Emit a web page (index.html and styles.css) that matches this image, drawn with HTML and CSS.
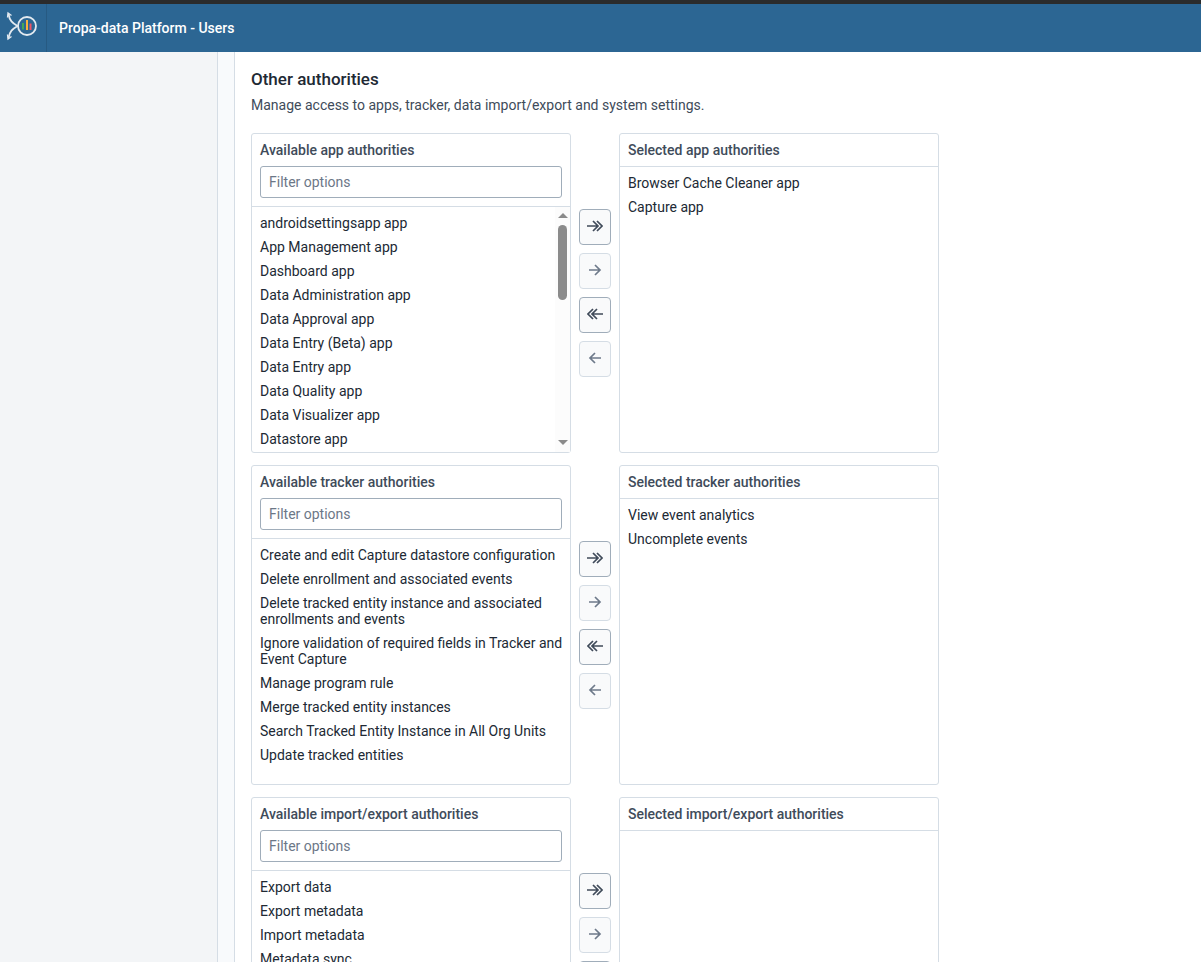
FILE: index.html
```html
<!DOCTYPE html>
<html lang="en">
<head>
  <meta charset="UTF-8">
  <meta name="viewport" content="width=device-width, initial-scale=1.0">
  <title>Propa-data Platform - Users</title>
  <link rel="stylesheet" href="styles.css">
</head>
<body>
  <svg class="symbols" aria-hidden="true">
    <symbol id="arrow-right" viewBox="0 0 16 16">
      <path d="M2 7h11M8 2l5 5-5 5"/>
    </symbol>
    <symbol id="arrow-left" viewBox="0 0 16 16">
      <path d="M14 7H3M8 2L3 7l5 5"/>
    </symbol>
    <symbol id="arrow-right-double" viewBox="0 0 16 16">
      <path d="M0 7h11M6 2l5 5-5 5M10 2l5 5-5 5"/>
    </symbol>
    <symbol id="arrow-left-double" viewBox="0 0 16 16">
      <path d="M16 7H5M10 2L5 7l5 5M6 2L1 7l5 5"/>
    </symbol>
  </svg>

  <header class="header">
    <a class="logo" href="#" aria-label="Home">
      <svg width="32" height="32" viewBox="0 0 32 32">
        <path d="M2.500 4C3.500 10.500 6.500 13 11.500 16C6.500 19 3.500 21.500 2.500 28"/>
        <path class="tip" d="M1.500 7.500L2 3l3.500 2.500M1.500 24.500L2 29l3.500-2.500"/>
        <circle cx="21" cy="16" r="9"/>
        <path class="bar-green" d="M17 13v6.500"/>
        <path class="bar-yellow" d="M21 10v10"/>
        <path class="bar-red" d="M24.500 13.500V20"/>
      </svg>
    </a>
    <h1>Propa-data Platform - Users</h1>
  </header>

  <div class="page">
    <nav class="sidebar"></nav>
    <main class="content">
      <h2>Other authorities</h2>
      <p class="description">Manage access to apps, tracker, data import/export and system settings.</p>

      <section class="transfer">
        <div class="picker">
          <div class="picker-header">
            <label for="filter-app">Available app authorities</label>
            <input type="text" id="filter-app" placeholder="Filter options">
          </div>
          <div class="picker-body">
            <ul class="options">
              <li>androidsettingsapp app</li>
              <li>App Management app</li>
              <li>Dashboard app</li>
              <li>Data Administration app</li>
              <li>Data Approval app</li>
              <li>Data Entry (Beta) app</li>
              <li>Data Entry app</li>
              <li>Data Quality app</li>
              <li>Data Visualizer app</li>
              <li>Datastore app</li>
            </ul>
            <div class="scrollbar" aria-hidden="true">
              <svg width="10" height="5" viewBox="0 0 10 5"><path d="M0 5L5 0L10 5z"/></svg>
              <div class="track"><div class="thumb"></div></div>
              <svg width="10" height="5" viewBox="0 0 10 5"><path d="M0 0L5 5L10 0z"/></svg>
            </div>
          </div>
        </div>
        <div class="actions">
          <button type="button" aria-label="Add all"><svg><use href="#arrow-right-double"/></svg></button>
          <button type="button" aria-label="Add selected" disabled><svg><use href="#arrow-right"/></svg></button>
          <button type="button" aria-label="Remove all"><svg><use href="#arrow-left-double"/></svg></button>
          <button type="button" aria-label="Remove selected" disabled><svg><use href="#arrow-left"/></svg></button>
        </div>
        <div class="picker">
          <div class="picker-header">
            <h3>Selected app authorities</h3>
          </div>
          <div class="picker-body">
            <ul class="options">
              <li>Browser Cache Cleaner app</li>
              <li>Capture app</li>
            </ul>
          </div>
        </div>
      </section>

      <section class="transfer">
        <div class="picker">
          <div class="picker-header">
            <label for="filter-tracker">Available tracker authorities</label>
            <input type="text" id="filter-tracker" placeholder="Filter options">
          </div>
          <div class="picker-body">
            <ul class="options">
              <li>Create and edit Capture datastore configuration</li>
              <li>Delete enrollment and associated events</li>
              <li>Delete tracked entity instance and associated enrollments and events</li>
              <li>Ignore validation of required fields in Tracker and Event Capture</li>
              <li>Manage program rule</li>
              <li>Merge tracked entity instances</li>
              <li>Search Tracked Entity Instance in All Org Units</li>
              <li>Update tracked entities</li>
            </ul>
          </div>
        </div>
        <div class="actions">
          <button type="button" aria-label="Add all"><svg><use href="#arrow-right-double"/></svg></button>
          <button type="button" aria-label="Add selected" disabled><svg><use href="#arrow-right"/></svg></button>
          <button type="button" aria-label="Remove all"><svg><use href="#arrow-left-double"/></svg></button>
          <button type="button" aria-label="Remove selected" disabled><svg><use href="#arrow-left"/></svg></button>
        </div>
        <div class="picker">
          <div class="picker-header">
            <h3>Selected tracker authorities</h3>
          </div>
          <div class="picker-body">
            <ul class="options">
              <li>View event analytics</li>
              <li>Uncomplete events</li>
            </ul>
          </div>
        </div>
      </section>

      <section class="transfer">
        <div class="picker">
          <div class="picker-header">
            <label for="filter-import">Available import/export authorities</label>
            <input type="text" id="filter-import" placeholder="Filter options">
          </div>
          <div class="picker-body">
            <ul class="options">
              <li>Export data</li>
              <li>Export metadata</li>
              <li>Import metadata</li>
              <li>Metadata sync</li>
            </ul>
          </div>
        </div>
        <div class="actions">
          <button type="button" aria-label="Add all"><svg><use href="#arrow-right-double"/></svg></button>
          <button type="button" aria-label="Add selected" disabled><svg><use href="#arrow-right"/></svg></button>
          <button type="button" aria-label="Remove all"><svg><use href="#arrow-left-double"/></svg></button>
          <button type="button" aria-label="Remove selected" disabled><svg><use href="#arrow-left"/></svg></button>
        </div>
        <div class="picker">
          <div class="picker-header">
            <h3>Selected import/export authorities</h3>
          </div>
          <div class="picker-body">
            <ul class="options"></ul>
          </div>
        </div>
      </section>
    </main>
  </div>
</body>
</html>
```

FILE: styles.css
```css
* {
  box-sizing: border-box;
}
body {
  display: flex;
  flex-direction: column;
  height: 100vh;
  margin: 0;
  overflow: hidden;
  font-family: Roboto, sans-serif;
  font-size: 14px;
  line-height: 16px;
  color: #212934;
  background: #f8fafc;
}
h1, h2, h3, p, ul {
  margin: 0;
  padding: 0;
}
.symbols {
  display: none;
}

/* Header bar */
.header {
  flex: none;
  display: flex;
  align-items: center;
  height: 52px;
  border-top: 4px solid #2b2b2b;
  background: #2c6693;
  color: #ffffff;
}
.header h1 {
  padding-left: 12px;
  font-size: 14px;
  font-weight: 500;
}
.logo {
  display: flex;
  align-items: center;
  height: 48px;
  padding: 0 8px 4px 6px;
  border-right: 1px solid #275a82;
}
.logo path, .logo circle {
  fill: none;
  stroke: #e3eaf0;
  stroke-width: 1.8;
}
.logo .tip {
  stroke-width: 1.3;
}
.logo .bar-green {
  stroke: #43a858;
  stroke-width: 2;
}
.logo .bar-yellow {
  stroke: #fbb03b;
  stroke-width: 2;
}
.logo .bar-red {
  stroke: #ef5366;
  stroke-width: 2;
}

/* Page */
.page {
  flex: 1;
  display: flex;
  gap: 16px;
  min-height: 0;
}
.sidebar {
  flex: none;
  width: 218px;
  background: #f3f5f7;
  border-right: 1px solid #d5dde5;
}
.content {
  flex: 1;
  padding: 16px;
  overflow: hidden;
  background: #ffffff;
  border-left: 1px solid #d5dde5;
}
.content h2 {
  font-size: 17px;
  font-weight: 500;
  line-height: 22px;
}
.description {
  margin: 6px 0 19px;
  line-height: 18px;
  color: #404b5a;
}

/* Transfer */
.transfer {
  display: flex;
  margin-bottom: 12px;
}
.picker {
  display: flex;
  flex-direction: column;
  width: 320px;
  height: 320px;
  border: 1px solid #d5dde5;
  border-radius: 3px;
}
.picker-header {
  display: flex;
  flex-direction: column;
  gap: 8px;
  padding: 8px;
  border-bottom: 1px solid #d5dde5;
}
.picker-header label, .picker-header h3 {
  font-size: 14px;
  font-weight: 500;
  color: #404b5a;
}
.picker-header input {
  height: 32px;
  padding: 0 8px;
  border: 1px solid #a0adba;
  border-radius: 3px;
  font-family: inherit;
  font-size: 14px;
  color: #212934;
}
.picker-header input::placeholder {
  color: #6c7787;
}
.picker-body {
  flex: 1;
  display: flex;
  min-height: 0;
}
.options {
  flex: 1;
  padding: 4px 0;
  overflow-y: auto;
  list-style: none;
}
.options li {
  padding: 4px 4px 4px 8px;
}
.scrollbar {
  display: flex;
  flex-direction: column;
  align-items: center;
  gap: 7px;
  width: 15px;
  padding: 6px 0 7px;
  background: #fcfcfc;
}
.scrollbar svg {
  flex: none;
  fill: #8b8b8b;
}
.track {
  flex: 1;
  width: 9px;
}
.thumb {
  height: 36%;
  border-radius: 5px;
  background: #8b8b8b;
}

/* Add and remove buttons */
.actions {
  display: flex;
  flex-direction: column;
  justify-content: center;
  gap: 8px;
  padding: 0 8px;
}
.actions button {
  display: flex;
  align-items: center;
  justify-content: center;
  width: 32px;
  height: 36px;
  padding: 0;
  border: 1px solid #a0adba;
  border-radius: 4px;
  background: #f9fafb;
  color: #404b5a;
  cursor: pointer;
}
.actions button:disabled {
  border-color: #d5dde5;
  color: #6e7a8a;
  cursor: default;
}
.actions svg {
  width: 16px;
  height: 16px;
  fill: none;
  stroke: currentColor;
  stroke-width: 1.7;
}
```
